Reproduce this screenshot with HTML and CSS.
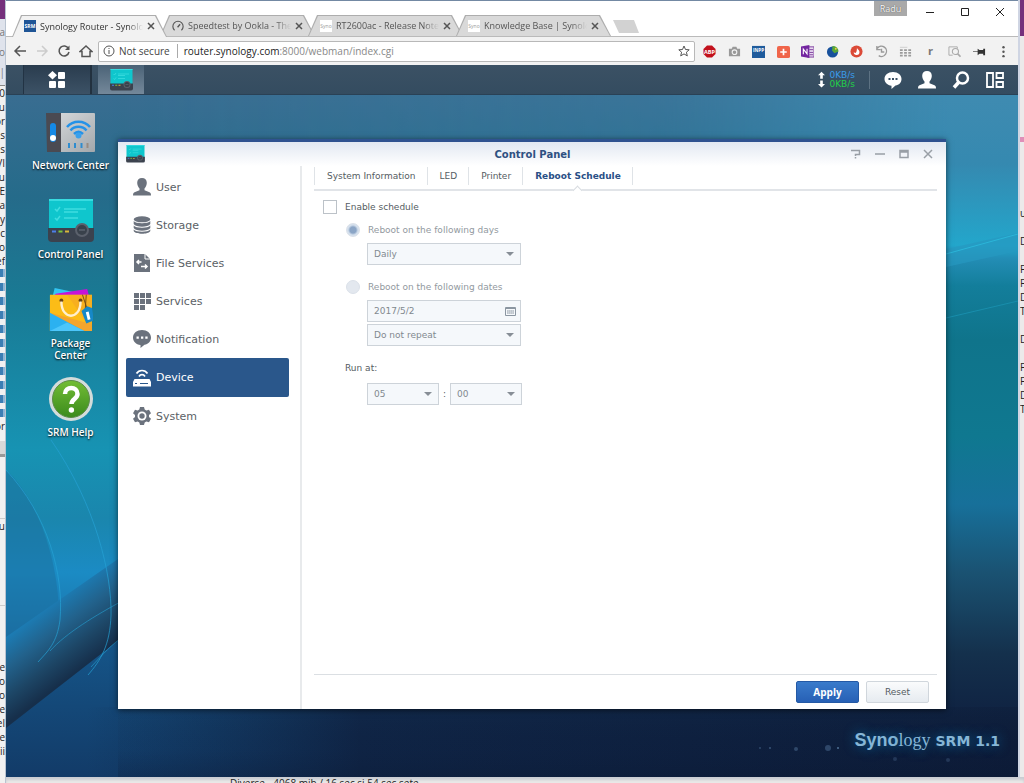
FILE: index.html
```html
<!DOCTYPE html>
<html lang="en">
<head>
    <meta charset="UTF-8">
    <title>Synology Router - Synology RT2600ac</title>
    <link rel="stylesheet" href="styles.css">
</head>
<body>
    <!-- windows behind the browser -->
    <div class="behind behind-left">
        <div class="purple"></div>
        <div class="behind-bar">a<br>o<br>|</div>
        <div class="lines">0<br>u<br>or<br>s<br>s<br>VI<br>u<br>E<br>ha<br>y<br>ic<br>lo<br>ef</div>
        <ul class="tree">
            <li></li><li></li><li></li><li></li><li></li><li></li><li></li><li></li><li></li><li></li><li></li>
        </ul>
        <div class="lines">or</div>
        <div class="grey-edge"></div>
        <div class="lines cell">u</div>
        <div class="lines last">e<br>o<br>o<br>le<br>el<br>le<br>ii</div>
    </div>

    <div class="browser">
        <div class="tabstrip">
            <div class="tab active">
                <span class="favicon srm">SRM</span>
                <span class="tab-title">Synology Router - Synolog</span>
                <button class="tab-close" aria-label="Close tab"><svg viewBox="0 0 8 8"><path d="M1 1l6 6M7 1l-6 6"/></svg></button>
            </div>
            <div class="tab">
                <svg class="favicon" viewBox="0 0 14 14" fill="none" stroke="#555"><path d="M3 12a6 6 0 1 1 8 0" stroke-width="1.3"/><path d="M6.500 8.500L9.500 5" stroke-width="1.6"/></svg>
                <span class="tab-title">Speedtest by Ookla - The</span>
                <button class="tab-close" aria-label="Close tab"><svg viewBox="0 0 8 8"><path d="M1 1l6 6M7 1l-6 6"/></svg></button>
            </div>
            <div class="tab">
                <span class="favicon syno">Syno</span>
                <span class="tab-title">RT2600ac - Release Note</span>
                <button class="tab-close" aria-label="Close tab"><svg viewBox="0 0 8 8"><path d="M1 1l6 6M7 1l-6 6"/></svg></button>
            </div>
            <div class="tab">
                <span class="favicon syno">Syno</span>
                <span class="tab-title">Knowledge Base | Synolo</span>
                <button class="tab-close" aria-label="Close tab"><svg viewBox="0 0 8 8"><path d="M1 1l6 6M7 1l-6 6"/></svg></button>
            </div>
            <button class="new-tab" aria-label="New tab"></button>
            <div class="win-buttons">
                <span class="profile">Radu</span>
                <button aria-label="Minimize"><svg viewBox="0 0 10 10"><path d="M1 5.500h8"/></svg></button>
                <button aria-label="Maximize"><svg viewBox="0 0 10 10"><path d="M1.500 1.500h7v7h-7z"/></svg></button>
                <button aria-label="Close"><svg viewBox="0 0 10 10"><path d="M1 1l8 8M9 1l-8 8"/></svg></button>
            </div>
        </div>

        <div class="toolbar">
            <button aria-label="Back"><svg viewBox="0 0 14 14"><path d="M13 7H2M7 2L2 7l5 5"/></svg></button>
            <button class="off" aria-label="Forward" disabled><svg viewBox="0 0 14 14"><path d="M2 7h10M7 2l5 5-5 5"/></svg></button>
            <button aria-label="Reload"><svg viewBox="0 0 14 14"><path d="M11.500 4.500A5 5 0 1 0 12 8"/><path d="M12.500 1.500v4.500H8z" fill="#555" stroke="none"/></svg></button>
            <button aria-label="Home"><svg viewBox="0 0 14 14"><path d="M1 7.500L7 2l6 5.500h-2V12.500H3V7.500z"/></svg></button>
            <div class="address">
                <svg class="info" viewBox="0 0 12 12"><circle cx="6" cy="6" r="5"/><path d="M6 5v4M6 3v1"/></svg>
                <span class="secure">Not secure</span>
                <span class="url"><b>router.synology.com</b>:8000/webman/index.cgi</span>
                <svg class="star" viewBox="0 0 12 12"><path d="M6 1l1.500 3.500 3.700.3-2.800 2.400.9 3.700L6 8.900l-3.300 2 .9-3.700L.8 4.800l3.700-.3z"/></svg>
            </div>
            <div class="extensions">
                <svg viewBox="0 0 14 14"><path d="M4.300.5h5.400l3.800 3.800v5.400l-3.800 3.800H4.300L.5 9.700V4.300z" fill="#c2111c"/><text x="7" y="9.500" font-size="6" font-weight="700" fill="#fff" text-anchor="middle">ABP</text></svg>
                <svg viewBox="0 0 14 14"><path d="M1 4h3l1-2h4l1 2h3v8H1z" fill="#999"/><circle cx="7" cy="7.700" r="2.500" fill="none" stroke="#f2f2f2" stroke-width="1.200"/></svg>
                <svg viewBox="0 0 14 14"><path d="M0 1h14v13H0z" fill="#1f5b9c"/><text x="7" y="8" font-size="5" font-weight="700" fill="#fff" text-anchor="middle">INPP</text></svg>
                <svg viewBox="0 0 14 14"><rect y="1" width="14" height="13" rx="2" fill="#f0654a"/><path d="M7 4v7M3.500 7.500h7" stroke="#fff" stroke-width="1.800"/></svg>
                <svg viewBox="0 0 14 14"><path d="M7 2h7v11H7z" fill="#e7d9ef" stroke="#7b3a9c"/><path d="M9 5h4M9 8h4M9 10.500h4" stroke="#7b3a9c"/><path d="M0 1.500L9 0v14L0 12.500z" fill="#7325a0"/><path d="M2.500 10V4.500l4 5V4" fill="none" stroke="#fff" stroke-width="1.200"/></svg>
                <svg viewBox="0 0 14 14"><circle cx="7" cy="7.500" r="6" fill="#17519c"/><path d="M7 1a6 6 0 0 1 6.500 6L9 9 6.500 6z" fill="#56a53a"/><circle cx="10.500" cy="4" r="1" fill="#f6d03c"/></svg>
                <svg viewBox="0 0 14 14"><circle cx="7" cy="7" r="6.500" fill="#db4a37"/><path d="M7.500 2.500c-.2 2 2.700 2.700 2.700 5a3 3 0 0 1-6.200.3l1.800.7c1.300 0 1.700-3 1.700-6z" fill="#fff"/></svg>
                <svg viewBox="0 0 14 14" fill="none" stroke="#9a9a9a" stroke-width="1.500"><path d="M2.500 3.500A5.500 5.500 0 1 1 4 11.500M2 1v4h4M7 4v3.500h3"/></svg>
                <svg viewBox="0 0 14 14" fill="none" stroke="#9a9a9a"><path d="M1 5.500h12M1 8.500h12M1 11.500h12" stroke-dasharray="3 1.500" stroke-width="2"/><path d="M1 2.500h8" stroke="#ccc"/></svg>
                <svg viewBox="0 0 14 14"><text x="7" y="10.500" font-size="12" font-weight="700" fill="#777" text-anchor="middle">r</text></svg>
                <svg viewBox="0 0 14 14" fill="none" stroke="#aaa"><path d="M5 11H1V2h9v2" /><circle cx="8" cy="7" r="3.300" stroke-width="1.200"/><path d="M10.500 9.500l3 3" stroke-width="1.800"/></svg>
                <svg viewBox="0 0 14 14"><path d="M0 7h6" stroke="#777"/><path d="M5 4l2 1.500h4V4h2v7h-2V9.500H7L5 11z" fill="#333"/></svg>
                <svg viewBox="0 0 14 14" fill="#555"><circle cx="7" cy="2.500" r="1.300"/><circle cx="7" cy="7.200" r="1.300"/><circle cx="7" cy="12" r="1.300"/></svg>
            </div>
        </div>

        <div class="taskbar">
            <button class="main-menu" aria-label="Main menu">
                <svg viewBox="0 0 18 18" fill="#fff"><path d="M4.500 0L9 4.300 4.500 8.600 0 4.300z"/><rect x="10" y="1" width="7" height="7" rx="1"/><rect x="1" y="10" width="7" height="7" rx="1"/><rect x="10" y="10" width="7" height="7" rx="1"/></svg>
            </button>
            <button class="task" aria-label="Control Panel">
                <svg viewBox="0 0 46 44"><use href="#panel-icon"/></svg>
            </button>
            <div class="speed">
                <svg viewBox="0 0 8 18" fill="#fff"><path d="M4 0l4 4H5.500v4h-3V4H0zM4 18l4-4H5.500v-4h-3v4H0z"/></svg>
                <div><div class="up">0KB/s</div><div class="down">0KB/s</div></div>
            </div>
            <div class="tray">
                <button aria-label="Notifications"><svg viewBox="0 0 18 18" fill="#fff"><path d="M9 1c5 0 8.500 3 8.500 7 0 3.500-2.500 6-6 6.600L7.500 18v-3.200C3.500 14.300.500 11.500.500 8 .500 4 4 1 9 1z"/><path d="M4.500 7h2v2h-2zM8 7h2v2H8zM11.500 7h2v2h-2z" fill="#384f63"/></svg></button>
                <button aria-label="Options"><svg viewBox="0 0 18 18"><use href="#user-icon" fill="#fff"/></svg></button>
                <button aria-label="Search"><svg viewBox="0 0 18 18" fill="none" stroke="#fff"><circle cx="10.500" cy="7" r="5.500" stroke-width="2.500"/><path d="M6.500 11.500L2 16.500" stroke-width="3.500"/></svg></button>
                <button aria-label="Widgets"><svg viewBox="0 0 18 18" fill="none" stroke="#fff" stroke-width="1.800"><path d="M1 2h6v14H1zM10.500 2h6.500v5h-6.500zM10.500 11h6.500v5h-6.500z"/></svg></button>
            </div>
        </div>

        <div class="desktop">
            <svg class="wallpaper" viewBox="0 0 1012 682" preserveAspectRatio="none">
                <defs>
                    <linearGradient id="leftSky" x1="0" y1="0" x2="0" y2="1">
                        <stop offset="0" stop-color="#396d91"/>
                        <stop offset=".15" stop-color="#256b8a"/>
                        <stop offset=".3" stop-color="#197a94"/>
                        <stop offset=".52" stop-color="#1793b3"/>
                        <stop offset=".62" stop-color="#1a86ad"/>
                        <stop offset=".7" stop-color="#1b8bc4"/>
                        <stop offset=".8" stop-color="#1b6fa6"/>
                        <stop offset="1" stop-color="#123e6c"/>
                    </linearGradient>
                    <linearGradient id="rightSky" x1="0" y1="0" x2="0" y2="1">
                        <stop offset="0" stop-color="#3f8bb1"/>
                        <stop offset=".1" stop-color="#3589b0"/>
                        <stop offset=".22" stop-color="#23a6cb"/>
                        <stop offset=".24" stop-color="#238db5"/>
                        <stop offset=".28" stop-color="#137e9b"/>
                        <stop offset=".36" stop-color="#0f748b"/>
                        <stop offset=".5" stop-color="#0f7890"/>
                        <stop offset=".6" stop-color="#17709a"/>
                        <stop offset=".7" stop-color="#1a5272"/>
                        <stop offset=".82" stop-color="#14304c"/>
                        <stop offset=".9" stop-color="#102443"/>
                        <stop offset="1" stop-color="#0b1733"/>
                    </linearGradient>
                    <linearGradient id="fade" x1="0" y1="0" x2="1" y2="0">
                        <stop offset=".1" stop-color="#000"/>
                        <stop offset=".65" stop-color="#444"/>
                        <stop offset=".93" stop-color="#fff"/>
                    </linearGradient>
                    <linearGradient id="valley" gradientUnits="userSpaceOnUse" x1="56" y1="500" x2="98" y2="556">
                        <stop offset="0" stop-color="#1c7cb4"/>
                        <stop offset=".35" stop-color="#22628c"/>
                        <stop offset=".7" stop-color="#1d4666"/>
                        <stop offset="1" stop-color="#162f4b"/>
                    </linearGradient>
                    <linearGradient id="slope" x1="0" y1="0" x2="0" y2="1">
                        <stop offset="0" stop-color="#15578b"/>
                        <stop offset=".5" stop-color="#144878"/>
                        <stop offset="1" stop-color="#123b68"/>
                    </linearGradient>
                    <linearGradient id="floor" x1="0" y1="0" x2="1" y2="0">
                        <stop offset=".08" stop-color="#102a4c" stop-opacity="0"/>
                        <stop offset=".35" stop-color="#0f2445"/>
                        <stop offset="1" stop-color="#0d1c39"/>
                    </linearGradient>
                    <linearGradient id="dusk" x1="0" y1="0" x2="0" y2="1">
                        <stop offset="0" stop-color="#1b4264" stop-opacity=".35"/>
                        <stop offset=".6" stop-color="#0b1833" stop-opacity=".1"/>
                        <stop offset="1" stop-color="#081228" stop-opacity=".5"/>
                    </linearGradient>
                    <mask id="m"><rect width="1012" height="682" fill="url(#fade)"/></mask>
                </defs>
                <rect width="1012" height="682" fill="url(#leftSky)"/>
                <rect width="1012" height="682" fill="url(#rightSky)" mask="url(#m)"/>
                <path d="M0 375C40 410 60 500 50 540 45 560 30 570 0 575z" fill="#1c6c9c" opacity=".45"/>
                <path d="M0 542L112 464 118 560 0 640z" fill="url(#valley)"/>
                <path d="M0 633L118 541H940V682H0z" fill="url(#slope)"/>
                <rect y="612" width="1012" height="70" fill="url(#floor)"/>
                <rect x="112" y="612" width="900" height="70" fill="url(#dusk)" opacity=".4"/>
                <path d="M940 154L1012 138V156L940 172z" fill="#2698c1" opacity=".7"/>
                <g fill="none" stroke="#25a1d4">
                    <path d="M0 375C42 420 58 480 54 525 51 548 42 556 32 567" opacity=".7"/>
                    <path d="M45 345C90 410 106 480 105 520 104 550 95 565 82 580" opacity=".7"/>
                    <path d="M44 556C60 538 90 520 118 505M85 572C98 558 105 550 118 541" opacity=".6"/>
                    <path d="M940 159L1012 139" stroke="#2bb5d8"/>
                    <path d="M940 223L1012 206" stroke="#198eac"/>
                </g>
                <g fill="#7ba6d0">
                    <circle cx="822" cy="653" r="3" opacity=".3"/>
                    <circle cx="832" cy="653" r="1" opacity=".6"/>
                    <circle cx="790" cy="654" r="2" opacity=".3"/>
                    <circle cx="764" cy="653" r="1" opacity=".4"/>
                    <circle cx="754" cy="653" r="1" opacity=".3"/>
                    <circle cx="889" cy="664" r="2" opacity=".2"/>
                    <circle cx="942" cy="665" r="2" opacity=".2"/>
                </g>
            </svg>

            <div class="shortcuts">
                <a href="#network">
                    <svg viewBox="0 0 50 44">
                        <defs><linearGradient id="metal" x1="0" y1="0" x2="1" y2="1"><stop offset="0" stop-color="#dadddf"/><stop offset="1" stop-color="#a3a8ac"/></linearGradient></defs>
                        <rect x="1" y="3" width="48" height="39" rx="1" fill="url(#metal)"/>
                        <path d="M0 3h15v39H1z" fill="#4a4a52"/>
                        <rect x="4" y="13" width="6" height="19" rx="3" fill="#1489e6"/><circle cx="7" cy="28" r="3" fill="#fff"/>
                        <g fill="none" stroke="#2492e8" stroke-width="2.500"><path d="M21 17c6-7 17-7 23 0M24.500 20.500c4-5 12-5 16 0M28 24c3-3 6-3 9 0"/></g>
                        <circle cx="32.500" cy="25.500" r="3" fill="#3aa0ec"/>
                        <path d="M23 33v5M29 33v5M35.500 33v5" stroke="#2e8ccf" stroke-width="2"/><path d="M41.500 33v5" stroke="#998b80" stroke-width="2"/>
                    </svg>
                    <span>Network Center</span>
                </a>
                <a href="#control">
                    <svg viewBox="0 0 46 44">
                        <g id="panel-icon">
                            <path d="M1 0h44v31H1z" fill="#0fc6cd"/>
                            <path d="M1 0h44v2H1z" fill="#38dbe0"/>
                            <path d="M7 10l2 2 3-4M7 19l2 2 3-4M16 10h22M16 13h14M16 19h14" fill="none" stroke="#3fdde0" stroke-width="1.500"/>
                            <path d="M0 29h46v10q0 4-4 4H4q-4 0-4-4z" fill="#3b424e"/>
                            <path d="M4 31.500h4v2H4z" fill="#4d7fe8"/><path d="M10.500 31.500h4v2h-4z" fill="#79c53d"/><path d="M17 31.500h4v2h-4z" fill="#d8b63a"/>
                            <circle cx="34" cy="31" r="7" fill="#5b616c"/><circle cx="34" cy="31" r="5" fill="#39414b"/><path d="M31 31h6" stroke="#6d7580"/>
                        </g>
                    </svg>
                    <span>Control Panel</span>
                </a>
                <a href="#packages">
                    <svg viewBox="0 0 48 46">
                        <path d="M7 0l38 8H5z" fill="#33c5f3"/><path d="M8 6L41 1l2 8H6z" fill="#c613d8"/>
                        <path d="M2 7h44v38H2z" fill="#fcbc17"/>
                        <path d="M20 7h26v38z" fill="#f09a2c" opacity=".4"/>
                        <path d="M2 26l44 12v7H2z" fill="#f3a52d"/>
                        <path d="M2 26l36 19H2z" fill="#2bb1f0"/><path d="M2 45l18-9 18 9z" fill="#4cc6fb"/>
                        <circle cx="14" cy="13" r="2" fill="#6a4311"/><circle cx="34" cy="13" r="2" fill="#6a4311"/>
                        <path d="M14 14c0 20 20 20 20 0" fill="none" stroke="#fff0cf" stroke-width="2.500"/>
                        <path d="M40 7l-1 15M36 7l5 15" stroke="#704a14" fill="none"/>
                        <path d="M35 24l6-5 5 2 2 13-8 3z" fill="#1688c8"/><path d="M41 25l2 8" stroke="#fff" stroke-width="3"/>
                    </svg>
                    <span>Package<br>Center</span>
                </a>
                <a href="#help">
                    <svg viewBox="0 0 44 44">
                        <defs><linearGradient id="green" x1="0" y1="0" x2="0" y2="1"><stop offset="0" stop-color="#73bd35"/><stop offset="1" stop-color="#3b8b1c"/></linearGradient></defs>
                        <circle cx="22" cy="22" r="22" fill="#d3dcda"/><circle cx="22" cy="22" r="18.500" fill="url(#green)" stroke="#5b8b48"/>
                        <path d="M16 17c0-8 12.500-8 12.500 0 0 5-6 5-6 10" fill="none" stroke="#fff" stroke-width="4.500"/><circle cx="22.400" cy="33" r="2.700" fill="#fff"/>
                    </svg>
                    <span>SRM Help</span>
                </a>
            </div>

            <div class="brand"><b>Syno</b><i>logy</i><strong>SRM 1.1</strong></div>

            <div class="window">
                <div class="titlebar">
                    <svg class="title-icon" viewBox="0 0 46 44"><use href="#panel-icon"/></svg>
                    <h1>Control Panel</h1>
                    <div class="title-buttons">
                        <button aria-label="Help"><svg viewBox="0 0 10 10"><path d="M0 1.500h8.500v4H4.500V7M4.500 8v1.500"/></svg></button>
                        <button aria-label="Minimize"><svg viewBox="0 0 10 10"><path d="M0 5h10"/></svg></button>
                        <button aria-label="Maximize"><svg viewBox="0 0 10 10"><path d="M1 1.500h8v7H1zM1 3h8"/></svg></button>
                        <button aria-label="Close"><svg viewBox="0 0 10 10"><path d="M1 1l8 8M9 1l-8 8"/></svg></button>
                    </div>
                </div>
                <div class="window-body">
                    <nav class="sidebar">
                        <a href="#user"><svg viewBox="0 0 18 18"><path id="user-icon" d="M9 0c3 0 4.800 1.800 4.800 4.800C13.800 7 13 9 11.500 10.500v1.700l5 2.100c1 .4 1.500 1.200 1.500 3.200H0c0-2 .5-2.800 1.500-3.200l5-2.100v-1.700C5 9 4.200 7 4.200 4.800 4.200 1.800 6 0 9 0z"/></svg>User</a>
                        <a href="#storage"><svg viewBox="0 0 18 18"><ellipse cx="9" cy="3.300" rx="8.300" ry="3"/><path d="M.7 5c2 3 14.600 3 16.600 0v3c-2 3.500-14.600 3.500-16.600 0zM.7 9.500c2 3 14.600 3 16.600 0v2.500c-2 3.500-14.600 3.500-16.600 0zM.7 13.500c2 3 14.600 3 16.600 0v1.500c-2 3.700-14.600 3.700-16.600 0z"/></svg>Storage</a>
                        <a href="#file"><svg viewBox="0 0 18 18"><path d="M1 0h11l5 5v13H1z"/><path d="M12 0v5h5" fill="none" stroke="#fff"/><path d="M8.500 8H4m2-2L4 8l2 2M8 12.500h6m-2-2l2 2-2 2" fill="none" stroke="#fff" stroke-width="1.500"/></svg>File Services</a>
                        <a href="#services"><svg viewBox="0 0 18 18"><path d="M1 1h5v5H1zM7 1h5v5H7zM13 1h5v5h-5zM1 7h5v5H1zM7 7h5v5H7zM13 7h5v5h-5zM1 13h5v5H1zM7 13h5v5H7z"/></svg>Services</a>
                        <a href="#notification"><svg viewBox="0 0 18 18"><path d="M9 0c5 0 9 3 9 7.500 0 4-3 6.800-6.500 7.300L7.500 18v-3C3 14.500 0 11.500 0 7.500 0 3 4 0 9 0z"/><path d="M3.500 6.500h2.300v2.300H3.500zM8 6.500h2.300v2.300H8zM12.300 6.500h2.300v2.300h-2.300z" fill="#fff"/></svg>Notification</a>
                        <a href="#device" class="selected"><svg viewBox="0 0 18 18"><path d="M1.500 10h15l1.500 3v4.500H0V13z"/><path d="M2 14.500h2M7 14.500h8" stroke="#2a578b" stroke-width="1.200"/><path d="M3.500 4.500C6 .5 12 .5 14.500 4.500M6 7.500c1.500-2.500 4.500-2.500 6 0" fill="none" stroke="#fff" stroke-width="1.700"/></svg>Device</a>
                        <a href="#system"><svg viewBox="0 0 18 18"><path d="M7 0h4l.7 2.600 1.600 1L16 2.800l2 3.500L16 8v2l2 1.700-2 3.500-2.700-.8-1.600 1L11 18H7l-.7-2.600-1.600-1-2.700.8-2-3.500L2 10V8L0 6.300l2-3.500 2.700.8 1.600-1z"/><circle cx="9" cy="9" r="4.500" fill="#fff"/><circle cx="9" cy="9" r="2.700"/></svg>System</a>
                    </nav>
                    <main class="panel">
                        <div class="panel-tabs">
                            <a href="#info">System Information</a>
                            <a href="#led">LED</a>
                            <a href="#printer">Printer</a>
                            <a href="#reboot" class="current">Reboot Schedule</a>
                        </div>
                        <form class="schedule">
                            <label class="option"><input type="checkbox"> Enable schedule</label>
                            <div class="options">
                                <label class="option off"><input type="radio" name="when" checked disabled> Reboot on the following days</label>
                                <select class="field" aria-label="Days" disabled><option>Daily</option></select>
                                <label class="option off second"><input type="radio" name="when" disabled> Reboot on the following dates</label>
                                <div class="field date">
                                    <input type="text" aria-label="Date" value="2017/5/2" disabled>
                                    <svg viewBox="0 0 11 9"><path d="M.5.500h10v8H.5zM.5 1.500h10M2 4h7M2 6h7" fill="none" stroke="#8b96a1"/><path d="M3.500 3v4M5.500 3v4M7.500 3v4" stroke="#d5dbe1" stroke-width=".6"/></svg>
                                </div>
                                <select class="field repeat" aria-label="Repeat" disabled><option>Do not repeat</option></select>
                            </div>
                            <label class="run-at" for="hour">Run at:</label>
                            <div class="time">
                                <select class="field" id="hour" disabled><option>05</option></select>
                                <span>:</span>
                                <select class="field" aria-label="Minute" disabled><option>00</option></select>
                            </div>
                        </form>
                        <div class="panel-footer">
                            <button class="btn btn-primary">Apply</button>
                            <button class="btn">Reset</button>
                        </div>
                    </main>
                </div>
            </div>
        </div>
    </div>

    <div class="behind behind-right">
        <div class="purple"></div>
        <div class="pink"></div>
        <div class="lines">u<br><br>D<br><br>F<br>F<br>D<br>T<br><br>D<br><br>F<br>F<br>D<br>T</div>
    </div>
    <div class="behind behind-bottom">Diverse - 4068 mib / 16 sec si 54 sec sete</div>
</body>
</html>
```
FILE: styles.css
```css
* {
    box-sizing: border-box;
}

body {
    margin: 0;
    height: 100vh;
    display: grid;
    grid-template-columns: 6px 1fr 6px;
    grid-template-rows: minmax(0, 1fr) 6px;
    background: #ebeae8;
    font-family: "DejaVu Sans", Verdana, sans-serif;
    font-size: 9px;
    overflow: hidden;
}

button {
    padding: 0;
    border: 0;
    background: none;
    font: inherit;
}

svg {
    display: block;
    flex: none;
}

a {
    color: inherit;
    text-decoration: none;
}

/* background windows */
.behind {
    overflow: hidden;
    color: #222;
    font: 10px/14px "Open Sans", sans-serif;
}

.behind-left {
    grid-row: 1 / 3;
    background: #f1f1f1;
    border-right: 1px solid #b9c3d0;
    direction: rtl;
}

.behind-right {
    background: #eceaea;
    border-left: 2px solid #cfd5e3;
}

.behind-bottom {
    grid-column: 2 / 4;
    padding-left: 224px;
    line-height: 12px;
    box-shadow: inset 0 3px 3px #c9ccd2;
}

.purple {
    height: 19px;
    background: #75307c;
}

.behind-right .purple {
    height: 36px;
}

.pink {
    height: 5px;
    margin: 101px 0 64px;
    background: #df8fb8;
}

.behind-bar {
    height: 67px;
    padding-top: 3px;
    color: #777;
    line-height: 20px;
    background: #dfe3ec;
    border-bottom: 1px solid #888;
}

.lines {
    white-space: nowrap;
}

.tree {
    display: flex;
    flex-direction: column;
    align-items: flex-end;
    gap: 6px;
    margin: 0;
    padding: 1px 0 2px;
    list-style: none;
}

.tree li {
    width: 5px;
    height: 8px;
    background: #3c7eb4;
    border-right: 2px solid #8fb6d6;
}

.grey-edge {
    height: 16px;
    margin: 8px 0 61px;
    background: #d8d8d8;
    border-bottom: 3px solid #999;
}

.cell {
    height: 88px;
    border-top: 1px solid #ccc;
    border-bottom: 1px solid #ccc;
}

.last {
    padding-top: 54px;
}

/* browser */
.browser {
    display: flex;
    flex-direction: column;
    min-width: 0;
    border-top: 1px solid #7389a3;
    background: #fff;
}

.tabstrip {
    display: flex;
    align-items: flex-end;
    height: 36px;
    padding-left: 6px;
    border-bottom: 1px solid #bababa;
    font-family: "Open Sans", sans-serif;
}

.tab {
    position: relative;
    z-index: 0;
    display: flex;
    align-items: center;
    gap: 4px;
    width: 155px;
    height: 21px;
    margin-right: -7px;
    padding: 0 12px;
    background: #adadad;
    clip-path: polygon(9px 0, 144px 0, 100% 100%, 0 100%);
    color: #555;
}

.tab::before {
    content: "";
    position: absolute;
    z-index: -1;
    inset: 1px 1px 0;
    background: #d9d9d9;
    clip-path: polygon(9px 0, 142px 0, 100% 100%, 0 100%);
}

.tab.active {
    z-index: 1;
    height: 22px;
    margin-bottom: -1px;
    color: #333;
}

.tab.active::before {
    background: #f2f2f2;
}

.favicon {
    width: 12px;
    height: 12px;
    flex: none;
    overflow: hidden;
    font-size: 5px;
    line-height: 12px;
    text-align: center;
}

.srm {
    background: #1f5596;
    color: #fff;
    font-weight: 700;
}

.syno {
    background: #fff;
    color: #999;
}

.tab-title {
    flex: 1;
    overflow: hidden;
    white-space: nowrap;
    mask-image: linear-gradient(to right, #000 85%, transparent);
}

.tab-close svg {
    width: 8px;
    height: 8px;
    stroke: #555;
    stroke-width: 1.5;
}

.new-tab {
    width: 26px;
    height: 13px;
    margin: 0 0 3px 9px;
    background: #d2d2d2;
    clip-path: polygon(0 0, 21px 0, 100% 100%, 6px 100%);
}

.win-buttons {
    display: flex;
    align-self: flex-start;
    gap: 25px;
    margin-left: auto;
    padding-right: 13px;
}

.win-buttons svg {
    width: 10px;
    height: 22px;
    fill: none;
    stroke: #222;
}

.profile {
    width: 33px;
    height: 15px;
    margin-right: -7px;
    background: #a9a9a9;
    color: #fff;
    text-align: center;
    text-shadow: 0 0 1px #333;
    line-height: 15px;
}

.toolbar {
    display: flex;
    align-items: center;
    gap: 8px;
    height: 28px;
    padding: 0 8px 0 7px;
    background: #f2f2f2;
    font: 10px "Open Sans", sans-serif;
}

.toolbar > button svg {
    width: 14px;
    height: 14px;
    fill: none;
    stroke: #555;
    stroke-width: 1.5;
}

.toolbar > .off svg {
    stroke: #ccc;
}

.address {
    display: flex;
    align-items: center;
    flex: 1;
    height: 21px;
    margin-left: -3px;
    padding: 0 4px;
    background: #fff;
    border: 1px solid #b8b8b8;
    border-radius: 2px;
}

.address svg {
    width: 12px;
    height: 12px;
    fill: none;
    stroke: #555;
}

.secure {
    margin: 0 6px 0 4px;
    padding-right: 7px;
    border-right: 1px solid #aaa;
    color: #444;
}

.url {
    flex: 1;
    color: #888;
}

.url b {
    color: #222;
    font-weight: 400;
}

.extensions {
    display: flex;
    justify-content: space-between;
    width: 307px;
}

.extensions svg {
    width: 13px;
    height: 13px;
}

/* SRM taskbar */
.taskbar {
    display: flex;
    align-items: center;
    height: 30px;
    padding: 0 14px 0 17px;
    background: linear-gradient(#3b5164, #344c60);
    border-bottom: 1px solid #2a4155;
}

.main-menu {
    display: flex;
    align-items: center;
    justify-content: center;
    width: 69px;
    height: 100%;
    background: linear-gradient(#2a3c4e, #3c5266);
    border-left: 1px solid #223344;
    border-right: 2px solid #22313f;
}

.main-menu svg {
    width: 18px;
    height: 18px;
}

.task {
    display: flex;
    align-items: center;
    justify-content: center;
    width: 46px;
    height: 100%;
    margin-left: 6px;
    background: linear-gradient(#4b6377, #74889a);
}

.task svg {
    width: 23px;
    height: 22px;
}

.speed {
    display: flex;
    align-items: center;
    gap: 4px;
    margin-left: auto;
    padding-right: 14px;
    border-right: 1px solid #5d7283;
    line-height: 9px;
}

.speed svg {
    width: 7px;
    height: 17px;
}

.up {
    color: #3a9bea;
}

.down {
    color: #22cf48;
}

.tray {
    display: flex;
    gap: 16px;
    margin-left: 14px;
}

.tray svg {
    width: 18px;
    height: 18px;
}

/* desktop */
.desktop {
    position: relative;
    flex: 1;
    min-height: 0;
    overflow: hidden;
    background: #12304f;
}

.wallpaper {
    position: absolute;
    inset: 0;
    width: 100%;
    height: 100%;
}

.shortcuts {
    position: relative;
    display: flex;
    flex-direction: column;
    gap: 12px;
    width: 129px;
    padding-top: 15px;
}

.shortcuts a {
    display: flex;
    flex-direction: column;
    align-items: center;
    gap: 5px;
    min-height: 77px;
    color: #fff;
    font: 600 10px/12px "Open Sans", sans-serif;
    text-align: center;
    text-shadow: 0 1px 2px #000;
}

.shortcuts svg {
    height: 44px;
}

.brand {
    position: absolute;
    right: 18px;
    bottom: 26px;
    display: flex;
    align-items: baseline;
    color: #86b6d6;
    font: 18px/22px "Liberation Sans", Arial, sans-serif;
    text-shadow: 0 0 12px #0b6fa8;
}

.brand i {
    font-family: "Liberation Serif", serif;
    font-style: normal;
}

.brand strong {
    margin-left: 5px;
    font: 700 14px "DejaVu Sans", sans-serif;
}

/* control panel window */
.window {
    position: absolute;
    inset: 44px 72px 68px 112px;
    display: flex;
    flex-direction: column;
    background: #fff;
    border-top: 3px solid #2f5290;
    box-shadow: 0 1px 6px rgba(0, 0, 0, .6);
}

.titlebar {
    display: flex;
    align-items: center;
    height: 24px;
    padding: 0 13px 0 8px;
    background: linear-gradient(#e2e8f2, #fff);
}

.title-icon {
    width: 19px;
    height: 18px;
}

.titlebar h1 {
    flex: 1;
    margin: 0;
    padding-left: 69px;
    color: #2f5182;
    font-size: 10px;
    text-align: center;
}

.title-buttons {
    display: flex;
    gap: 14px;
}

.title-buttons svg {
    width: 10px;
    height: 10px;
    fill: none;
    stroke: #999fa6;
    stroke-width: 1.5;
}

.window-body {
    display: flex;
    flex: 1;
}

.sidebar {
    width: 184px;
    padding: 2px 11px 0 8px;
    border-right: 2px solid #e8eaec;
}

.sidebar a {
    display: flex;
    align-items: center;
    gap: 5px;
    height: 38px;
    padding-left: 7px;
    border-radius: 2px;
    color: #5b6166;
    font-size: 11px;
}

.sidebar svg {
    width: 18px;
    height: 18px;
    fill: #6b727d;
}

.sidebar .selected {
    height: 39px;
    background: #2a578b;
    color: #fff;
}

.sidebar .selected svg {
    fill: #fff;
}

.panel {
    display: flex;
    flex: 1;
    flex-direction: column;
    padding: 1px 9px 0 12px;
}

.panel-tabs {
    display: flex;
    height: 24px;
    border-bottom: 2px solid #e1e4e8;
}

.panel-tabs a {
    position: relative;
    height: 18px;
    padding: 0 11px 0 12px;
    border-right: 1px solid #dfe3e7;
    color: #555c62;
    line-height: 18px;
}

.panel-tabs a:first-child {
    border-left: 1px solid #dfe3e7;
}

.panel-tabs .current {
    color: #2a4f86;
    font-weight: 700;
}

/* notch under the current tab */
.panel-tabs .current::after {
    content: "";
    position: absolute;
    top: 20px;
    left: 50%;
    width: 6px;
    height: 6px;
    margin-left: -3px;
    background: #fff;
    border: solid #d8dce1;
    border-width: 1px 0 0 1px;
    transform: rotate(45deg);
}

.schedule {
    flex: 1;
    padding: 8px 9px;
    color: #555c62;
}

.option {
    display: flex;
    align-items: center;
    gap: 8px;
    height: 16px;
}

.option input {
    appearance: none;
    width: 14px;
    height: 14px;
    margin: 0;
    background: #fff;
    border: 1px solid #bcc2c8;
}

.option.off {
    color: #9299a0;
}

.options {
    display: flex;
    flex-direction: column;
    margin: 7px 0 14px 23px;
}

.options .option {
    margin-bottom: 5px;
}

.options .second {
    margin-top: 14px;
}

.options input[type="radio"] {
    background: #e3e8ef;
    border-color: #dbe1e9;
    border-radius: 50%;
}

.options input[type="radio"]:checked {
    background: radial-gradient(#8ba5c6 3px, #d5e0ed 5px);
}

.field {
    width: 154px;
    height: 22px;
    padding: 0 6px;
    border: 1px solid #cdd3d9;
    border-radius: 0;
    background: #f5f8fb;
    color: #82898f;
    font: inherit;
    opacity: 1;
}

select.field {
    appearance: none;
    background: #f5f8fb url("data:image/svg+xml,%3Csvg xmlns='http://www.w3.org/2000/svg' width='8' height='4'%3E%3Cpath d='M0 0h8L4 4z' fill='%23878e96'/%3E%3C/svg%3E") no-repeat right 6px center;
}

.options .field {
    margin-left: 21px;
}

.date {
    display: flex;
    align-items: center;
    padding-right: 4px;
}

.date input {
    flex: 1;
    min-width: 0;
    padding: 0;
    border: 0;
    background: none;
    color: inherit;
    font: inherit;
}

.date svg {
    width: 11px;
    height: 9px;
}

.options .repeat {
    margin-top: 2px;
}

.run-at {
    display: block;
    margin-left: 22px;
    line-height: 16px;
}

.time {
    display: flex;
    align-items: center;
    gap: 4px;
    margin: 7px 0 0 44px;
}

.time .field {
    width: 72px;
}

.panel-footer {
    display: flex;
    justify-content: flex-end;
    gap: 7px;
    padding: 6px 8px;
    border-top: 1px solid #dbdfe3;
}

.btn {
    width: 63px;
    height: 22px;
    background: linear-gradient(#fafbfc, #e6ebf0);
    border: 1px solid #d0d6dc;
    border-radius: 2px;
    color: #555c62;
}

.btn-primary {
    background: linear-gradient(#3a7bcb, #2760b5);
    border-color: #2459a5;
    color: #fff;
    font: 700 10px "Open Sans", sans-serif;
}
```
